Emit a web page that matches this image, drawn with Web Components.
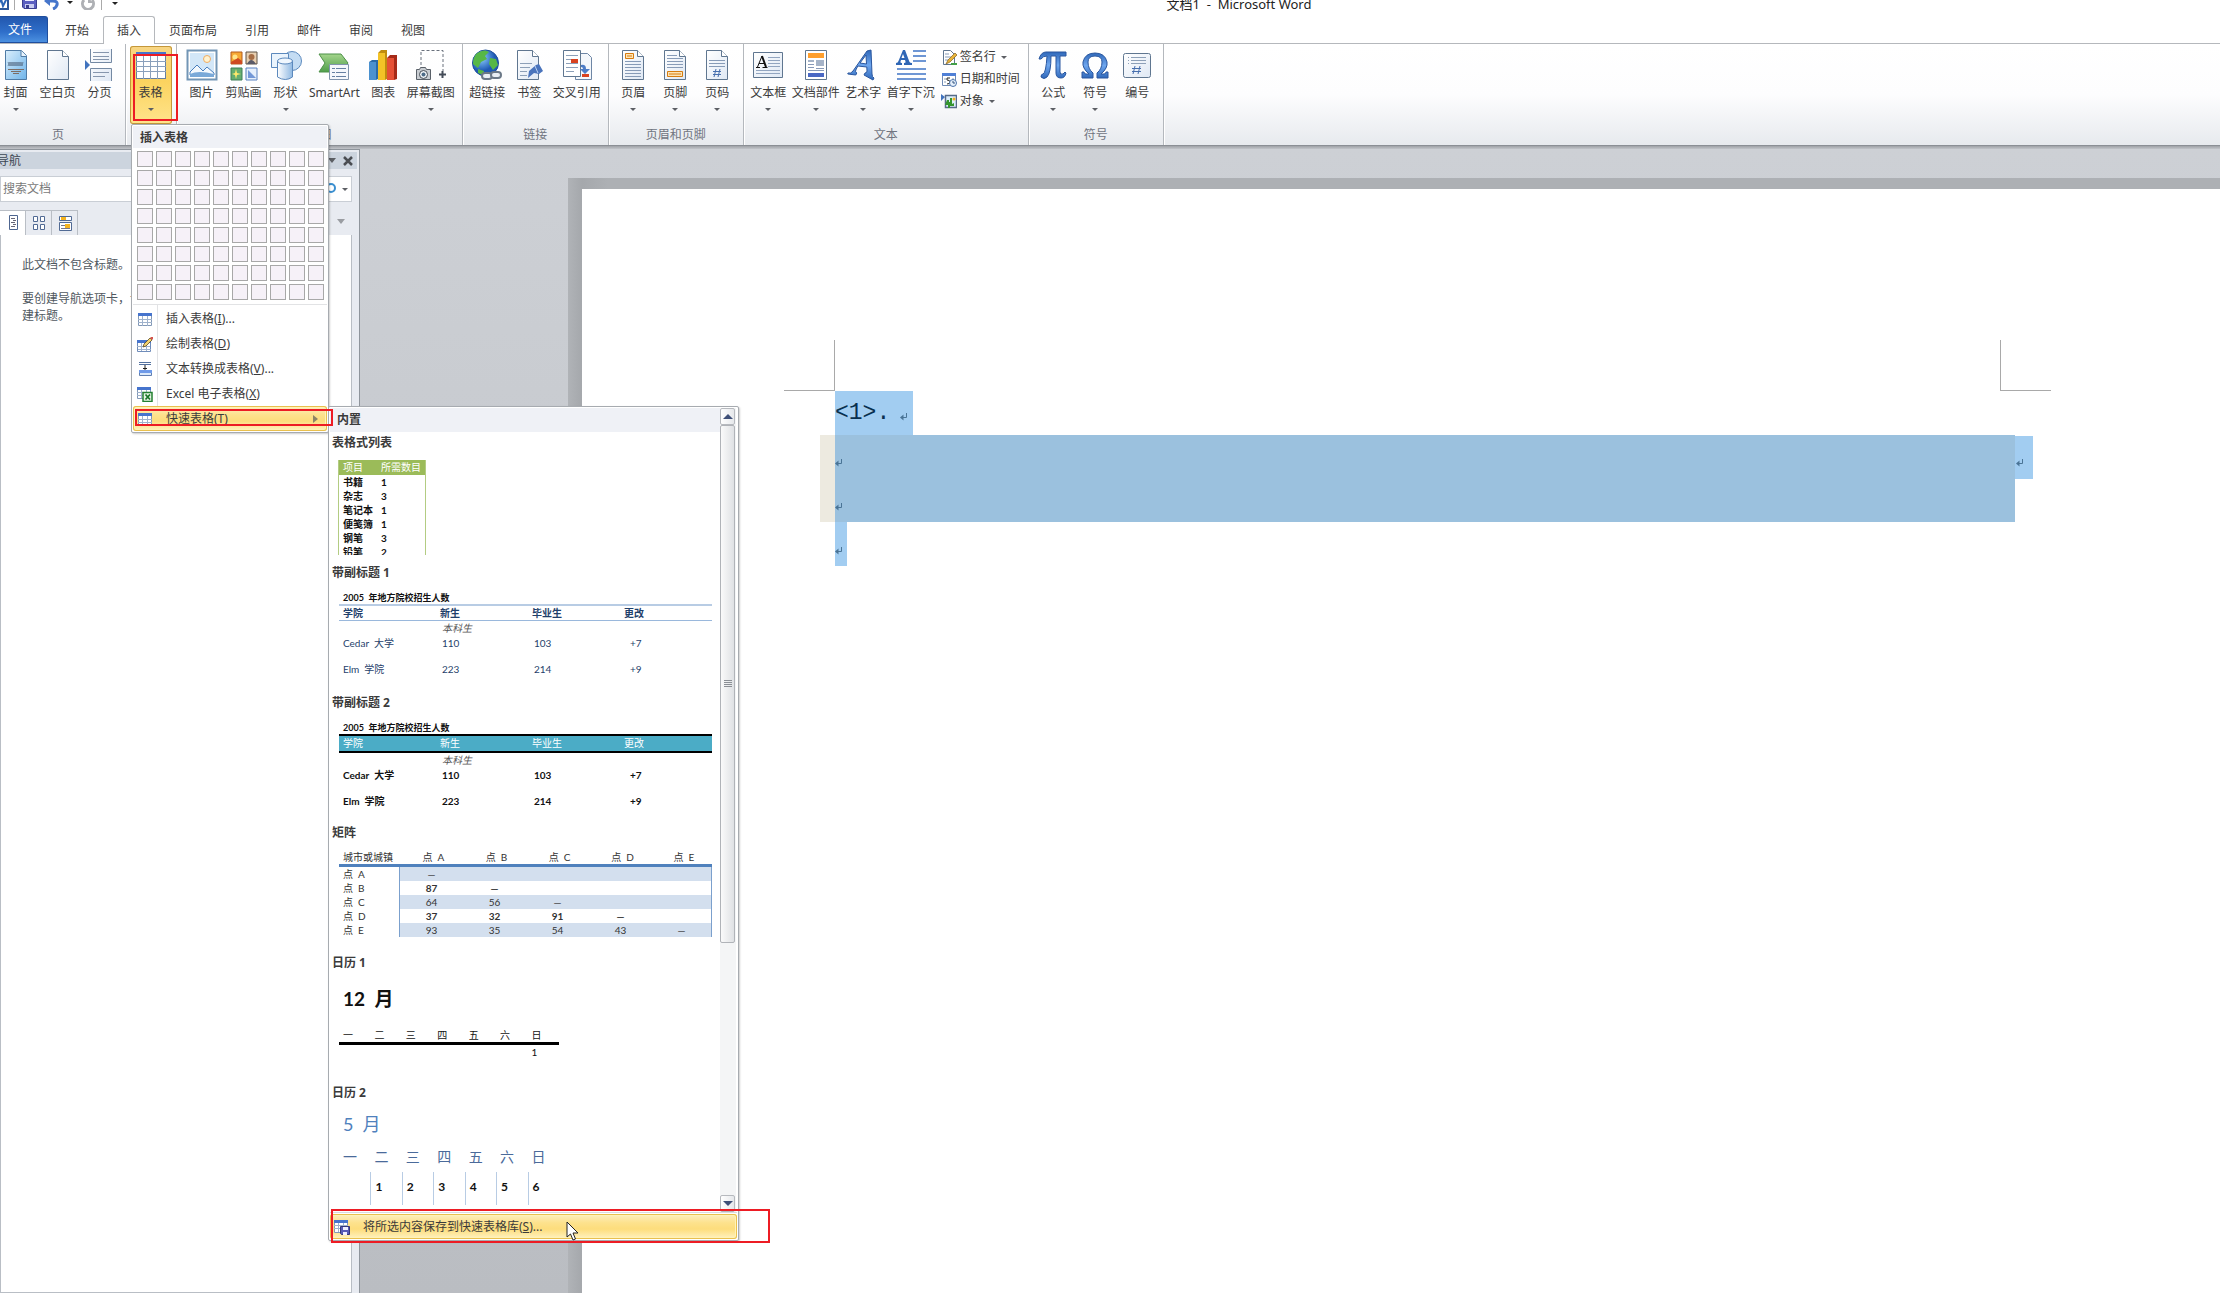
<!DOCTYPE html>
<html lang="zh-CN">
<head>
<meta charset="utf-8">
<title>文档1 - Microsoft Word</title>
<style>
html,body{margin:0;height:100%;overflow:hidden;background:#fff}
body{font:12px/16px "Noto Sans","Noto Sans CJK SC",sans-serif;color:#3b3b3b;--line:#a7abb0;--head:#eff1f6}
</style>
</head>
<body>
<word-window></word-window>
<script>
const ICONS = {
cover:`<path d="M5.500 1.500h16l5 5v24h-21z" fill="url(#p)" stroke="#4f7ba6"/><path d="M21 1.500v6h6" fill="#e9f4fd" stroke="#4f7ba6"/><path d="M8 13l2 4 2-4 2 4 2-4 2 4 2-4 2 4 1-4M8 17l2-4 2 4 2-4 2 4 2-4 2 4 2-4" stroke="#59718c" fill="none" stroke-width=".8"/><path d="M8 20.500h16M11 22.500h10M13 24.500h6" stroke="#7d6d65"/>`,
blank:`<path d="M5.500 1.500h15l6 6v23h-21z" fill="url(#w)" stroke="#5f7690"/><path d="M20.500 1.500v6h6" fill="#fff" stroke="#5f7690"/>`,
pagebreak:`<path d="M6.500 0v13.500h21V0M6.500 32V19.500h21V32" fill="url(#w)" stroke="#7489a3"/><path d="M9 3.500h16M9 7.500h16M9 10.500h16M9 23.500h16M9 27.500h12" stroke="#8696ad"/><path d="M1 11l5 5-5 5z" fill="#4173be"/>`,
table:`<rect x="1.500" y="3.500" width="29" height="26" fill="#fff" stroke="#67809f"/><path d="M1 3h30v4H1z" fill="#4573cd"/><path d="M1 12.500h30M1 17.500h30M1 22.500h30M8.500 7v23M15.500 7v23M22.500 7v23" stroke="#8aa0bc"/>`,
picture:`<rect x="1.500" y="1.500" width="29" height="29" fill="#fff" stroke="#7295b5" stroke-width="2"/><path d="M4 4h24v24H4z" fill="#d3e7f8"/><circle cx="21" cy="10" r="3.500" fill="#fff2cf" stroke="#efac63"/><path d="M4 23l7-7 6 6 4-4 7 6v2H4z" fill="#f3f8fd" stroke="#487ebd"/><path d="M4 25q8-4 24 0v3H4z" fill="#7aa9d8"/>`,
clipart:`<path d="M3 3h11v12H3z" fill="#f7a834" stroke="#b45c1c"/><circle cx="7" cy="8" r="2.500" fill="#ffe58a"/><path d="M3 13l7-4 4 3v3H3z" fill="#cf4a23"/><path d="M18 3h11v12H18z" fill="#e9d0b1" stroke="#5d5247"/><circle cx="23.500" cy="8" r="3" fill="#a76e46"/><path d="M19 15q4-8 9 0z" fill="#5a5a68"/><path d="M3 19h11v12H3z" fill="#64ad70" stroke="#3e7f56"/><path d="M8 20l1 4 4 1-4 1-1 4-1-4-3-1 3-1z" fill="#ffe96b"/><path d="M18 19h11v12H18z" fill="#e5effc" stroke="#5a82c0"/><path d="M20 21l8 8h-8z" fill="#7398d7"/>`,
shapes:`<circle cx="22" cy="12" r="9.500" fill="#c4dcf3" stroke="#5c89bd"/><path d="M1.500 4.500h17v14h-17z" fill="#eaf4fd" stroke="#5c89bd"/><path d="M7.500 12v16q8 5 15 0V12z" fill="url(#c)" stroke="#5c89bd"/><ellipse cx="15" cy="12" rx="7.500" ry="3" fill="#f0f7fe" stroke="#5c89bd"/>`,
smartart:`<path d="M1 5h22l7 9-7 9H1l6-9z" fill="url(#g)" stroke="#4d9148"/><path d="M11.500 15.500h19v15h-19z" fill="#f5f8fc" stroke="#8094ac"/><path d="M14 19.500h3M14 23.500h3M14 27.500h3M18 19.500h10M18 23.500h10M18 27.500h10" stroke="#6680a2"/>`,
chart:`<path d="M2 13l3-2h6v19l-2 1H2z" fill="#2a6aa8"/><path d="M2 13h7v18H2z" fill="#4b91cf"/><path d="M11 4l3-3h6v29l-2 1h-7z" fill="#c08c0d"/><path d="M11 4h7v27h-7z" fill="#f3c226"/><path d="M20 9l3-3h7v24l-3 1h-7z" fill="#a52a18"/><path d="M20 9h7v22h-7z" fill="#e55035"/>`,
screenshot:`<path d="M6 16V1.500h22V22" fill="none" stroke="#69707c" stroke-dasharray="3 2"/><path d="M24 25.500h7M27.500 22v7" stroke="#444c58" stroke-width="2"/><path d="M1.500 20.500h3l1-2h5l1 2h4v10h-14z" fill="#c8ccd1" stroke="#596068"/><circle cx="8.500" cy="25.500" r="4" fill="#eef2f6" stroke="#454c55"/><circle cx="8.500" cy="25.500" r="2" fill="#4c6b87"/>`,
link:`<circle cx="14.500" cy="14" r="13" fill="url(#b)" stroke="#1d4d9b"/><path d="M5 5q8-6 13-2l-4 4 2 3-6 3-3 6-5-4q0-6 3-10zM19 9l6 1 2 6-5 5-4-6zM7 20l6 2-1 4-5-2z" fill="#57b746"/><g fill="none" stroke="#6b7887" stroke-width="2"><rect x="11" y="24" width="10" height="6" rx="3" fill="#e9eef4"/><rect x="20" y="23" width="10" height="6" rx="3" fill="#e9eef4"/></g>`,
bookmark:`<path d="M4.500 1.500h15l6 6v23h-21z" fill="url(#w)" stroke="#5f7690"/><path d="M19.500 1.500v6h6" fill="#fff" stroke="#5f7690"/><path d="M7 14.500h12M7 18.500h10M7 22.500h7M7 26.500h7" stroke="#8da0b8"/><path d="M16 22l7-6 3-1 4 7-4 3-5-1-6 5z" fill="#4a74bc"/><path d="M22 17l3 7" stroke="#b9d0f3"/>`,
crossref:`<path d="M14.500 4.500h12l4 4v22h-16z" fill="#f4f7fb" stroke="#6e86a5"/><path d="M2.500 1.500h17v26h-17z" fill="#fff" stroke="#5f7690"/><path d="M5 6.500h12M5 10.500h5M5 14.500h12M5 18.500h12M5 22.500h8" stroke="#8da0b8"/><path d="M10 10h7v4h-7zM21 25h7v3h-7z" fill="#d9421f"/><path d="M20 16q5-1 5 4h4l-5 5-5-5h3q0-2-2-2z" fill="#4d7cc6"/>`,
header:`<path d="M5.500 1.500h15l6 6v23h-21z" fill="url(#w)" stroke="#5f7690"/><path d="M20.500 1.500v6h6" fill="#fff" stroke="#5f7690"/><path d="M8.500 4.500h8v5h-8z" fill="#fde4b5" stroke="#d67c10"/><path d="M10 7h5" stroke="#d67c10"/><path d="M8 12.500h16M8 15.500h16M8 18.500h16M8 21.500h16M8 24.500h16M8 27.500h16" stroke="#879bb7"/>`,
footer:`<path d="M5.500 1.500h15l6 6v23h-21z" fill="url(#w)" stroke="#5f7690"/><path d="M20.500 1.500v6h6" fill="#fff" stroke="#5f7690"/><path d="M8.500 22.500h15v5h-15z" fill="#fde4b5" stroke="#d67c10"/><path d="M10 25h12" stroke="#d67c10"/><path d="M8 6.500h10M8 9.500h16M8 12.500h16M8 15.500h16M8 18.500h16" stroke="#879bb7"/>`,
pagenum:`<path d="M5.500 1.500h15l6 6v23h-21z" fill="url(#w)" stroke="#5f7690"/><path d="M20.500 1.500v6h6" fill="#fff" stroke="#5f7690"/><path d="M8 11.500h16M8 14.500h16M8 17.500h16" stroke="#879bb7"/><path d="M15 20l-2 8M19 20l-2 8M12 22.500h8M12 25.500h8" stroke="#476fae" fill="none"/>`,
textbox:`<path d="M1.500 3.500h29v25h-29z" fill="url(#w)" stroke="#5f7690"/><path d="M16 8.500h12M16 11.500h12M16 14.500h12M16 17.500h12M4 21.500h24M4 24.500h24" stroke="#92a5c0"/><path d="M5.500 18l4.500-11M7 14.500h5.500M4 18.500h4M10.500 18.500h5" stroke="#111" fill="none"/><path d="M10 7l4 11" stroke="#111" stroke-width="2"/>`,
parts:`<path d="M5.500 1.500h21v29h-21z" fill="#fff" stroke="#5f7690"/><path d="M8 4h16v5H8z" fill="#ff9f2e"/><path d="M8 11h6v2H8zM16 11h8v6h-8z" fill="#a5b3c8"/><path d="M8 15.500h6M8 18.500h6M8 21.500h16M16 19.500h8" stroke="#8799b8"/><path d="M8 24h16v4H8z" fill="#4a68c4"/>`,
wordart:`<path d="M1 24q3 1 5-2L20 2l4-1 1 24q0 3 2 4l-1 2-9-5 1-2q2 0 2-2l-.200-4-9-1-2 4q-1 2 1 3l-1 2-8-1zM13 14l6.500 1L19 6z" fill="url(#d)" stroke="#2a579f"/>`,
dropcap:`<path d="M1 16v-2q2 0 2.500-2L8 1h2l4.500 12q.5 1 2.500 1v2H9v-2q2 0 1.500-1.500L10 11H6l-.5 1.500Q5 14 7 14v2zM6.500 9h3L8 5z" fill="#2f66b5"/><path d="M18 2h13M18 7h13M18 12h13M2 20h29M2 25h29M2 30h29" stroke="#3f74c6" stroke-width="1.500"/>`,
pi:`<path d="M2 10q2-7 7-7h20v4h-6v16q0 3 3 2l2-2 1 1q-1 5-5 5-5 0-5-5V7h-5q0 17-4 21-3 3-6 0 0-3 2-3 3-1 4-18-4 0-6 3z" fill="url(#d)" stroke="#2a579f"/>`,
omega:`<path d="M3 29v-6h2q0 2 2 2h3Q3 19 4 13 6 4 16 4t12 9q1 6-6 12h3q2 0 2-2h2v6H18v-5q5-4 5-11 0-6-7-6t-7 6q0 7 5 11v5z" fill="url(#d)" stroke="#2a579f"/>`,
number:`<rect x="2.500" y="4.500" width="27" height="24" rx="2" fill="url(#w)" stroke="#5f7690"/><path d="M7 8.500h1M10 8.500h15M7 11.500h1M10 11.500h15M7 14.500h1M10 14.500h15" stroke="#8da0b8"/><path d="M14 17l-2 8M19 17l-2 8M11 19.500h9M11 22.500h9" stroke="#476fae" fill="none"/>`,
sign:`<path d="M2.500 1.500h7l4 4v10h-11z" fill="#fff" stroke="#5f7690"/><path d="M4 5h4M4 8h6M4 11h4" stroke="#879bb7"/><path d="M5 15l2-4 7-7 2 2-7 7z" fill="#e9b53c" stroke="#82601c" stroke-width=".7"/><path d="M10 14h6v2h-6z" fill="#43a047"/>`,
date:`<path d="M1.500 2.500h13v12h-13z" fill="#fff" stroke="#6e8ab5"/><path d="M1 2h14v3H1z" fill="#4f7fd6"/><path d="M3 8h2M3 11h2M11 8h2" stroke="#8da0b8"/><path d="M9 7H6v2q3 0 3 2t-3 2" fill="none" stroke="#222"/><circle cx="12" cy="12" r="3.500" fill="#e6f0fb" stroke="#4d74aa"/><path d="M12 10v2h2" fill="none" stroke="#33557f"/>`,
object:`<path d="M4.500 2.500h11v12h-11z" fill="#dceefb" stroke="#566a88" stroke-width="1.500"/><path d="M0 1l4 3-4 4z" fill="#4173be"/><circle cx="13" cy="6" r="1.500" fill="#f4b024"/><path d="M6 7h2v2h1V5h2v6l2-1v3h-4v2H7v-3H4z" fill="#35952e"/>`,
table16:`<path d="M1.500 2.500h13v12h-13z" fill="#fff" stroke="#8298b6"/><path d="M1 2h14v3H1z" fill="#4674cd"/><path d="M1 8.500h14M1 11.500h14M5.500 5v10M10.500 5v10" stroke="#9fb2cc"/>`,
draw16:`<path d="M.500 4.500h13v11H.500z" fill="#fff" stroke="#6f8cba"/><path d="M0 4h14v3H0z" fill="#4674cd"/><path d="M0 10.500h13M4.500 7v8M9.500 7v8M1 13.500h13" stroke="#9fb2cc"/><path d="M6 11l1-3 6-6 2 2-6 6z" fill="#f3d36f" stroke="#5c4a26" stroke-width=".8"/><path d="M13 2l1-1h2v2l-1 1z" fill="#d5554c"/>`,
conv16:`<path d="M2 1.500h12M2 3.500h12" stroke="#53719f"/><path d="M8 4v6M6 7.500h4" stroke="#222"/><path d="M2.500 9.500h12v5h-12z" fill="#dbe9fa" stroke="#5f7eb0"/><path d="M2 9h13v3H2z" fill="#6f9ae8"/>`,
excel16:`<path d="M.500 1.500h13v11H.500z" fill="#fff" stroke="#8298b6"/><path d="M0 1h14v3H0z" fill="#4674cd"/><path d="M0 6.500h14M0 9.500h14M4.500 4v8M9.500 4v8" stroke="#9fb2cc"/><path d="M6 6.500h9v9H6z" fill="#e7f6e4" stroke="#238031" stroke-width="1.500"/><path d="M8.500 8.500l4.500 5M13 8.500l-4.500 5" stroke="#187427" stroke-width="1.700"/>`,
savetable:`<path d="M.500 1.500h13v12H.500z" fill="#fff" stroke="#8298b6"/><path d="M0 1h14v3H0z" fill="#4674cd"/><path d="M0 6.500h14M0 9.500h14M4.500 4v9M9.500 4v9" stroke="#9fb2cc"/><path d="M6.500 7.500h9v8h-8l-1-1z" fill="#575bb6" stroke="#343778"/><path d="M9 8h5v3H9zM9 13h4v3H9z" fill="#eef"/>`,
save:`<path d="M.500.500h14v14H2l-1.500-1.500z" fill="#5b5fc0" stroke="#3b3e8e"/><path d="M3 1h9v6H3z" fill="#eef"/><path d="M3 10h9v4H3z" fill="#c9ccf0"/><path d="M4 11h3v3H4z" fill="#3b3e8e"/>`,
word:`<path d="M1 1h14v14H1z" fill="#fff" stroke="#2b579a" stroke-width="2"/><path d="M2 4l3 8 3-7 2 7 4-8" fill="none" stroke="#2b65b5" stroke-width="2"/>`,
undo:`<path d="M4 7h5q5 0 4 4-1 3-4 4" fill="none" stroke="#4676cb" stroke-width="3"/><path d="M0 7l6-5v10z" fill="#4676cb"/>`,
redo:`<path d="M12 4a5.500 5.500 0 1 1-8 0" fill="none" stroke="#aeb0b4" stroke-width="3" transform="translate(0 2)"/><path d="M8 3v6h5z" fill="#aeb0b4"/>`,
nav1:`<path d="M4.500.500h8v14h-8z" fill="#fff" stroke="#4e6690"/><path d="M6 3.500h4M8 5.500h3M6 7.500h4M8 9.500h3M6 11.500h4" stroke="#667"/>`,
nav2:`<path d="M2.500 1.500h4v5h-4zM9.500 1.500h4v5h-4zM2.500 9.500h4v5h-4zM9.500 9.500h4v5h-4z" fill="#fff" stroke="#516a94"/>`,
nav3:`<path d="M2.500 1.500h12v4h-12zM2.500 7.500h12v8h-12z" fill="#fff" stroke="#516a94"/><path d="M4 2h5v3H4zM8 9h5v4H8z" fill="#f5b41f"/><path d="M4 10.500h4M4 13.500h9" stroke="#778"/>`,
find:`<circle cx="9" cy="7" r="4" fill="none" stroke="#3a8fd0" stroke-width="2"/><path d="M6 10l-4 4" stroke="#3a8fd0" stroke-width="2"/>`,
close:`<path d="M4 4l8 8M12 4l-8 8" stroke="#4a4d52" stroke-width="2.500"/>`
};
const DEFS = `<defs>
<linearGradient id="p" x2="1" y2="1"><stop stop-color="#d9eefc"/><stop offset="1" stop-color="#6fb4ea"/></linearGradient>
<linearGradient id="w" x2="1" y2="1"><stop stop-color="#fff"/><stop offset="1" stop-color="#dfe8f4"/></linearGradient>
<linearGradient id="c"><stop stop-color="#fff"/><stop offset="1" stop-color="#8fb8e2"/></linearGradient>
<linearGradient id="g" x2="0" y2="1"><stop stop-color="#a4d58c"/><stop offset="1" stop-color="#4f9e4a"/></linearGradient>
<linearGradient id="d" x2="0" y2="1"><stop stop-color="#2f68ba"/><stop offset=".5" stop-color="#6ea6ee"/><stop offset="1" stop-color="#2f68ba"/></linearGradient>
<radialGradient id="b" cx=".35" cy=".3"><stop stop-color="#8fd0ff"/><stop offset="1" stop-color="#1f5ab4"/></radialGradient></defs>`;

const RESET = `*{box-sizing:border-box}button,input{font:inherit;color:inherit;border:0;margin:0;padding:0;background:none;outline:0}p,h2,h3{margin:0;font:inherit}
.arr{width:0;height:0;border:3px solid transparent;border-top:3px solid #5c5f64;border-bottom:0;flex:none}`;
function define(name, render) {
  customElements.define(name, class extends HTMLElement {
    connectedCallback() {
      if (this.shadowRoot) return;
      const t = document.createElement('template');
      t.innerHTML = `<style>${RESET}</style>` + render(n => this.getAttribute(n) || '', n => this.hasAttribute(n));
      this.attachShadow({ mode: 'open' }).append(t.content.cloneNode(true));
    }
  });
}

define('ui-icon', a => {
  const s = a('size') || 16;
  return `<style>:host{display:block;flex:none;width:${s}px;height:${s}px}svg{display:block}</style>
  <svg width="${s}" height="${s}" viewBox="0 0 ${s} ${s}" fill="none" aria-hidden="true">${DEFS}${ICONS[a('name')]}</svg>`;
});

define('title-bar', () => `<style>
:host{display:flex;height:16px;position:relative;overflow:hidden;align-items:flex-start}
.qat{display:flex;align-items:flex-start;margin-top:-6px}
button{display:block}
.q1{margin-left:-7px}.sep{width:1px;height:16px;background:#aaa;margin:0 7px 0 5px}
.d{display:flex;width:20px;height:16px;align-items:center;justify-content:center}
.cust{flex-direction:column;gap:2px;margin-left:-4px}.cust i{width:6px;height:1px;background:#222}
.arr{border-top-color:#222}
.title{position:absolute;left:0;right:0;top:-5px;font-size:13px;line-height:18px;padding-left:258px;text-align:center;color:#222;white-space:pre}
</style><div class="qat"><ui-icon class="q1" name="word"></ui-icon><span class="sep"></span><button aria-label="保存"><ui-icon name="save"></ui-icon></button>
<button aria-label="撤消" style="margin-left:6px"><ui-icon name="undo"></ui-icon></button><button class="d" aria-label="撤消列表"><span class="arr"></span></button><button aria-label="重复"><ui-icon name="redo"></ui-icon></button><span class="sep"></span><button class="d cust" aria-label="自定义"><i></i><span class="arr"></span></button></div>
<div class="title">文档1  -  Microsoft Word</div>`);

define('ribbon-tab', (a, h) => `<style>:host{display:block}
button{height:28px;padding:0 13px;border:1px solid transparent;border-bottom:0;white-space:nowrap;line-height:26px;display:block}
.on{background:#fff;border-color:#b5b8bc;border-radius:3px 3px 0 0}
.file{width:48px;margin-right:3px;padding:0 8px;text-align:left;color:#fff;height:27px;background:linear-gradient(#2257ae,#2f6fca 60%,#4b90e0);border:1px solid #1f4e9e;border-left:0;border-radius:0 3px 0 0}
</style><button role="tab" class="${h('file') ? 'file' : ''} ${h('on') ? 'on' : ''}"><slot></slot></button>`);

define('ribbon-button', (a, h) => `<style>:host{display:block;flex:none}
button{display:flex;flex-direction:column;align-items:center;min-width:42px;height:78px;padding:3px 3px 0 2px;white-space:nowrap;border-radius:3px}
.on{background:linear-gradient(#f8d685,#fbd35f 45%,#ffe48c);box-shadow:inset 0 0 0 1px #c4973a}
.l{margin:4px 0 7px}</style>
<button class="${h('on') ? 'on' : ''}"><ui-icon name="${a('icon')}" size="32"></ui-icon><span class="l"><slot></slot></span>${h('menu') ? '<span class="arr"></span>' : ''}</button>`);

define('ribbon-small-button', (a, h) => `<style>:host{display:block}button{display:flex;align-items:center;gap:3px;height:22px;white-space:nowrap}.arr{margin-left:2px}</style>
<button><ui-icon name="${a('icon')}"></ui-icon><slot></slot>${h('menu') ? '<span class="arr"></span>' : ''}</button>`);

define('ribbon-group', a => `<style>:host{display:flex;flex:none;flex-direction:column;justify-content:space-between;padding:2px 4px 1px;border-right:1px solid #b4b8bd;box-shadow:1px 0 #fff;height:101px}
.row{display:flex}.lab{text-align:center;color:#70747f;line-height:18px;white-space:nowrap}</style>
<div class="row"><slot></slot></div><div class="lab">${a('label')}</div>`);

define('word-ribbon', () => `<style>:host{display:block}
.tabs{display:flex;height:28px;border-bottom:1px solid #b5b8bc}
.body{display:flex;height:102px;background:linear-gradient(#fff,#fdfdfe 50%,#e7eaee);border-bottom:1px solid #8b8f95;overflow:hidden}
.first{margin-left:-9px}.col{display:flex;flex-direction:column;width:86px;padding:0 0 0 3px}</style>
<div class="tabs" role="tablist"><ribbon-tab file>文件</ribbon-tab><ribbon-tab>开始</ribbon-tab><ribbon-tab on>插入</ribbon-tab><ribbon-tab>页面布局</ribbon-tab><ribbon-tab>引用</ribbon-tab><ribbon-tab>邮件</ribbon-tab><ribbon-tab>审阅</ribbon-tab><ribbon-tab>视图</ribbon-tab></div>
<div class="body">
<ribbon-group class="first" label="页"><ribbon-button icon="cover" menu>封面</ribbon-button><ribbon-button icon="blank">空白页</ribbon-button><ribbon-button icon="pagebreak">分页</ribbon-button></ribbon-group>
<ribbon-group><ribbon-button icon="table" menu on>表格</ribbon-button></ribbon-group>
<ribbon-group label="插图"><ribbon-button icon="picture">图片</ribbon-button><ribbon-button icon="clipart">剪贴画</ribbon-button><ribbon-button icon="shapes" menu>形状</ribbon-button><ribbon-button icon="smartart">SmartArt</ribbon-button><ribbon-button icon="chart">图表</ribbon-button><ribbon-button icon="screenshot" menu>屏幕截图</ribbon-button></ribbon-group>
<ribbon-group label="链接"><ribbon-button icon="link">超链接</ribbon-button><ribbon-button icon="bookmark">书签</ribbon-button><ribbon-button icon="crossref">交叉引用</ribbon-button></ribbon-group>
<ribbon-group label="页眉和页脚"><ribbon-button icon="header" menu>页眉</ribbon-button><ribbon-button icon="footer" menu>页脚</ribbon-button><ribbon-button icon="pagenum" menu>页码</ribbon-button></ribbon-group>
<ribbon-group label="文本"><ribbon-button icon="textbox" menu>文本框</ribbon-button><ribbon-button icon="parts" menu>文档部件</ribbon-button><ribbon-button icon="wordart" menu>艺术字</ribbon-button><ribbon-button icon="dropcap" menu>首字下沉</ribbon-button>
<div class="col"><ribbon-small-button icon="sign" menu>签名行</ribbon-small-button><ribbon-small-button icon="date">日期和时间</ribbon-small-button><ribbon-small-button icon="object" menu>对象</ribbon-small-button></div></ribbon-group>
<ribbon-group label="符号"><ribbon-button icon="pi" menu>公式</ribbon-button><ribbon-button icon="omega" menu>符号</ribbon-button><ribbon-button icon="number">编号</ribbon-button></ribbon-group>
</div>`);

define('nav-pane', () => `<style>
:host{display:flex;flex-direction:column;flex:none;width:360px;background:#e8ebf1;border:1px solid #8f959c;border-left:0;border-bottom:0;padding:2px 7px 0 0}
.head{display:flex;align-items:center;height:17px;background:#ccd4de;margin-right:-5px;padding-right:1px;color:#3d4754}
.head span{margin-left:-3px;flex:1}.arr{border-width:4px;border-top-width:5px;border-bottom:0}
.search{display:flex;align-items:center;height:26px;margin:7px 0 8px;background:#fff;border:1px solid #c9ced5;padding:0 3px 0 2px;gap:4px}
input{flex:1;min-width:0;height:22px;padding-bottom:2px}input::placeholder{color:#7a7a7a;opacity:1}
.tabs{display:flex;align-items:center}.tabs button{width:26px;height:26px;display:flex;align-items:center;justify-content:center;border:1px solid #b9bec5;border-left:0}
.tabs .on{background:#fff;border-bottom-color:#fff}.tabs .arr{margin:0 7px 4px auto;border-top-color:#9a9da2}
.body{flex:1;margin-top:-1px;background:#fff;border:1px solid #b9bec5;border-top:0;padding:21px 44px 0 21px;color:#505860;line-height:17px}
.fill{height:1px;background:#b9bec5;margin:-1px 0 0 26px}.body p+p{margin-top:17px}</style>
<div class="head"><span>导航</span><button aria-label="窗格选项"><div class="arr"></div></button><button aria-label="关闭" style="margin-left:4px"><ui-icon name="close"></ui-icon></button></div>
<div class="search"><input type="text" placeholder="搜索文档" aria-label="搜索文档"><ui-icon name="find"></ui-icon><span class="arr" style="border-width:3px 3px 0"></span></div>
<div class="tabs"><button class="on" aria-label="标题"><ui-icon name="nav1"></ui-icon></button><button aria-label="页面"><ui-icon name="nav2"></ui-icon></button><button aria-label="结果"><ui-icon name="nav3"></ui-icon></button><span class="arr"></span></div>
<div class="fill"></div>
<div class="body"><p>此文档不包含标题。</p><p>要创建导航选项卡，请通过应用标题样式在文档中创建标题。</p></div>`);

define('return-mark', () => `<style>:host{display:block;flex:none}svg{display:block}</style><svg width="8" height="8" viewBox="0 0 8 8"><path d="M6.500 0v4.500H1" fill="none" stroke="#4a7496"/><path d="M0 4.500L3.500 1.500v6z" fill="#4a7496"/></svg>`);

define('doc-page', () => `<style>
:host{display:flex;flex:1;min-width:0;background:linear-gradient(#cdd0d5,#babdc2);padding:29px 0 0 208px}
.frame{flex:1;min-width:0;background:linear-gradient(90deg,#b0b3b7,#a5a8ac 14px,#adb0b4 40px);padding:11px 0 0 14px;display:flex}
.page{flex:1;min-width:0;background:#fff;padding:151px 219px 0 253px}
.marks{display:flex;justify-content:space-between;margin:0 -50px 0 -51px}.marks i{width:51px;height:51px;border:0 solid #a9a9a9;border-bottom-width:1px}
.marks i:first-child{border-right-width:1px}.marks i:last-child{border-left-width:1px}
.sel{display:flex;background:#a2cdf1}.l1{width:78px;height:44px;align-items:center;color:#08304f;font:23px/46px "Liberation Mono",monospace;justify-content:space-between;padding-right:5px}
.l1 return-mark{margin-top:8px}
.tab{display:flex;height:87px;margin:0 -32px 0 -15px}.tab .pre{width:15px;background:#edeae0}
.cell{flex:1;background:#9bc1de;display:flex;flex-direction:column;gap:36px;padding-top:24px}
.end{width:18px;height:43px;margin-top:1px;padding:23px 0 0 1px}.l3{width:12px;height:44px;padding-top:25px}
</style><div class="frame"><div class="page"><div class="marks"><i></i><i></i></div>
<div class="sel l1"><span>&lt;1&gt;.</span><return-mark></return-mark></div>
<div class="tab"><div class="pre"></div><div class="cell"><return-mark></return-mark><return-mark></return-mark></div><div class="sel end"><return-mark></return-mark></div></div>
<div class="sel l3"><return-mark></return-mark></div></div></div>`);

define('menu-command', (a, h) => `<style>:host{display:block}
button{display:flex;align-items:center;width:100%;height:25px;padding:0 4px;border-radius:3px;white-space:nowrap;text-align:left}
.on{background:linear-gradient(#fdf0c2,#fde28d 35%,#fddd7c 60%,#fff3c4);box-shadow:inset 0 0 0 1px #e9c04e,inset 0 0 0 2px #fff2b8}
span{flex:1;margin-left:13px}i{border:4px solid transparent;border-left:5px solid #8d8467;border-right:0;margin-right:5px}</style>
<button role="menuitem" class="${h('on') ? 'on' : ''}"><ui-icon name="${a('icon')}"></ui-icon><span><slot></slot></span>${h('sub') ? '<i></i>' : ''}</button>`);

define('table-menu', () => `<style>
:host{display:block;width:198px;background:#fff;border:1px solid var(--line);border-radius:2px;padding:1px;box-shadow:1px 1px 2px #0003}
h2{background:var(--head);line-height:24px;padding-left:7px;font-weight:bold;height:22px}
.grid{display:grid;grid-template-columns:repeat(10,16px);gap:3px;padding:3px 4px 4px}.grid i{height:16px;background:#f6f1f8;border:1px solid #a8a8a8}
.cmds{border-top:1px solid #e2e3e5;padding-top:1px;background:linear-gradient(90deg,transparent 24px,#e2e3e5 24px,#e2e3e5 25px,transparent 25px)}</style>
<h2>插入表格</h2><div class="grid">${'<i></i>'.repeat(80)}</div>
<div class="cmds" role="menu"><menu-command icon="table16">插入表格(<u>I</u>)...</menu-command><menu-command icon="draw16">绘制表格(<u>D</u>)</menu-command><menu-command icon="conv16">文本转换成表格(<u>V</u>)...</menu-command><menu-command icon="excel16">Excel 电子表格(<u>X</u>)</menu-command><menu-command icon="table16" on sub>快速表格(<u>T</u>)</menu-command></div>`);

define('gallery-item', a => `<style>:host{display:block;height:130px}
h3{height:22px;line-height:22px;padding-left:2px;font-weight:bold}
.pv{height:95px;overflow:hidden;margin:6px 0 0 8px;color:#111;font-family:Lato,"Noto Sans CJK SC",sans-serif}</style>
<h3>${a('label')}</h3><div class="pv"><slot></slot></div>`);

const enrol = cls => `<table class="en ${cls}"><caption>2005&ensp;年地方院校招生人数</caption>
<tr><th>学院</th><th>新生</th><th>毕业生</th><th>更改</th></tr><tr class="s"><td></td><td><em>本科生</em></td><td></td><td></td></tr>
<tr><td>Cedar&ensp;大学</td><td>110</td><td>103</td><td>+7</td></tr><tr><td>Elm&ensp;学院</td><td>223</td><td>214</td><td>+9</td></tr></table>`;
const matrix = [['A','—'],['B','87','—'],['C','64','56','—'],['D','37','32','91','—'],['E','93','35','54','43','—']];
const days = [...'一二三四五六日'];

define('table-gallery', () => `<style>
:host{display:block;width:411px;background:#fff;border:1px solid var(--line);border-radius:2px;padding:1px;box-shadow:1px 1px 2px #0003}
.view{display:flex;height:804px}.list{flex:1;overflow:hidden}
h2{background:var(--head);height:24px;line-height:24px;padding-left:7px;font-weight:bold}
.bar{width:16px;background:#f4f5f6;display:flex;flex-direction:column;padding:0 1px 0 0;margin-right:1px}
.bar button{height:17px;border:1px solid #b6b9be;border-radius:2px;background:linear-gradient(90deg,#fff,#e6e8eb);display:flex;align-items:center;justify-content:center}
.arr{border-width:5px 5px 0;border-top-color:#3f5078}.up{transform:scaleY(-1)}
.thumb{flex:0 0 518px;border:1px solid #b0b3b8;border-radius:2px;background:linear-gradient(90deg,#fafafa,#dfe1e4);display:flex;flex-direction:column;align-items:center;gap:1px;padding-top:254px}.thumb i{width:8px;height:1px;background:#8b8f95}
.gap{flex:1}.foot{border-top:1px solid #d9dbde;padding-top:1px}
table{border-spacing:0;table-layout:fixed;text-align:left;font-size:10px;line-height:14px}td,th{padding:0 0 0 4px;vertical-align:top;white-space:nowrap}
.li{width:88px;border:1px solid #b3cc82;border-top:0;font-weight:bold}.li th{background:#9bbb59;color:#fff;font-weight:normal;line-height:15px}.li td:first-child,.li th:first-child{width:38px}
.en{width:373px;margin-left:1px;color:#1f3f6b}.en caption{font-size:9px;line-height:15px;height:14px;font-weight:bold;text-align:left;padding-left:4px;color:#111}
.en th:first-child{width:97px}.en th{font-weight:bold;border-top:2px solid #b8cce4;border-bottom:1px solid #9ab8dc}
.en tr:nth-child(n+3) td{height:26px;line-height:15px}.en tr td:nth-child(n+2){padding-left:6px}.en tr td:nth-child(4){padding-left:10px}.en .s td{line-height:15px;color:#555;height:15px}
.b{color:#111}.b tr:nth-child(n+3){font-weight:bold}.b th{background:#4bacc6;color:#fff;font-weight:normal;border:solid #000;border-width:2px 0;line-height:15px}
.mx{width:373px;margin-left:1px;text-align:center;color:#333}.mx th{width:63px;font-weight:normal;border-bottom:3px solid #4f81bd}.mx th:first-child{width:61px;text-align:left}.mx th:last-child{width:60px}
.mx td{padding:0}.mx td:first-child{text-align:left;padding-left:4px;border-right:1px solid #7ba0cd}.mx td:last-child{border-right:1px solid #7ba0cd}
.mx tr:nth-child(even) td:nth-child(n+2){background:#d3dfee}.mx tr:nth-child(odd) td:nth-child(n+2){font-weight:bold}
.c1{width:220px;margin-left:1px}.c1 caption{font:bold 19px/38px Lato,"Noto Sans CJK SC";text-align:left;padding:0 0 0 4px}.c1 th{font-weight:normal;padding-top:10px;border-bottom:3px solid #000}
.c1 td{line-height:15px}
.c2{width:220px;margin-left:1px}.c2 caption{font-size:18px;line-height:28px;text-align:left;padding-left:4px;color:#4f81bd}.c2 th{font-weight:normal;font-size:14px;line-height:30px;padding-top:4px;color:#4a6a9a}
.c2 td{font-weight:bold;font-size:12px;line-height:30px;height:33px}.c2 td+td{border-left:1px solid #b8cce4}
</style>
<div class="view"><div class="list"><h2>内置</h2>
<gallery-item label="表格式列表"><table class="li"><tr><th>项目</th><th>所需数目</th></tr>${[['书籍',1],['杂志',3],['笔记本',1],['便笺簿',1],['钢笔',3],['铅笔',2]].map(r => `<tr><td>${r[0]}</td><td>${r[1]}</td></tr>`).join('')}</table></gallery-item>
<gallery-item label="带副标题 1">${enrol('a')}</gallery-item>
<gallery-item label="带副标题 2">${enrol('b')}</gallery-item>
<gallery-item label="矩阵"><table class="mx"><tr><th>城市或城镇</th>${[...'ABCDE'].map(c => `<th>点&ensp;${c}</th>`).join('')}</tr>${matrix.map(r => `<tr><td>点&ensp;${r[0]}</td>${[1,2,3,4,5].map(i => `<td>${r[i] || ''}</td>`).join('')}</tr>`).join('')}</table></gallery-item>
<gallery-item label="日历 1"><table class="c1"><caption>12&ensp;月</caption><tr>${days.map(d => `<th>${d}</th>`).join('')}</tr><tr>${days.map((d, i) => `<td>${i == 6 ? 1 : ''}</td>`).join('')}</tr></table></gallery-item>
<gallery-item label="日历 2"><table class="c2"><caption>5&ensp;月</caption><tr>${days.map(d => `<th>${d}</th>`).join('')}</tr><tr>${days.map((d, i) => `<td>${i || ''}</td>`).join('')}</tr></table></gallery-item>
</div><div class="bar"><button aria-label="向上滚动"><span class="arr up"></span></button><div class="thumb"><i></i><i></i><i></i><i></i></div><div class="gap"></div><button aria-label="向下滚动"><span class="arr"></span></button></div></div>
<div class="foot"><menu-command icon="savetable" on>将所选内容保存到快速表格库(<u>S</u>)...</menu-command></div>`);

define('mouse-pointer', () => `<style>:host{display:block}svg{display:block}</style><svg width="14" height="20" viewBox="0 0 14 20"><path d="M1 1v15l3.500-3 2.500 6 2.500-1-2.500-6H12z" fill="#fff" stroke="#222"/></svg>`);

define('word-window', () => `<style>
:host{display:flex;flex-direction:column;height:100vh;position:relative;overflow:hidden}
title-bar,word-ribbon{flex:none}
.work{flex:1;min-height:0;display:flex;padding-top:3px;background:linear-gradient(#9fa2a7,#cdd0d5 4px)}
.over{position:absolute}.menu{left:131px;top:124px}.gallery{left:328px;top:406px}
.box{border:2px solid #ed1c24}.b1{left:133px;top:54px;width:41px;height:63px}.b2{left:135px;top:409px;width:194px;height:13px}.b3{left:331px;top:1209px;width:435px;height:30px}
.ptr{left:566px;top:1221px}</style>
<title-bar></title-bar><word-ribbon></word-ribbon>
<div class="work"><nav-pane></nav-pane><doc-page></doc-page></div>
<table-menu class="over menu"></table-menu><table-gallery class="over gallery"></table-gallery>
<div class="over box b1" style="box-sizing:content-box"></div><div class="over box b2" style="box-sizing:content-box"></div><div class="over box b3" style="box-sizing:content-box"></div><mouse-pointer class="over ptr"></mouse-pointer>`);
</script>
</body>
</html>
